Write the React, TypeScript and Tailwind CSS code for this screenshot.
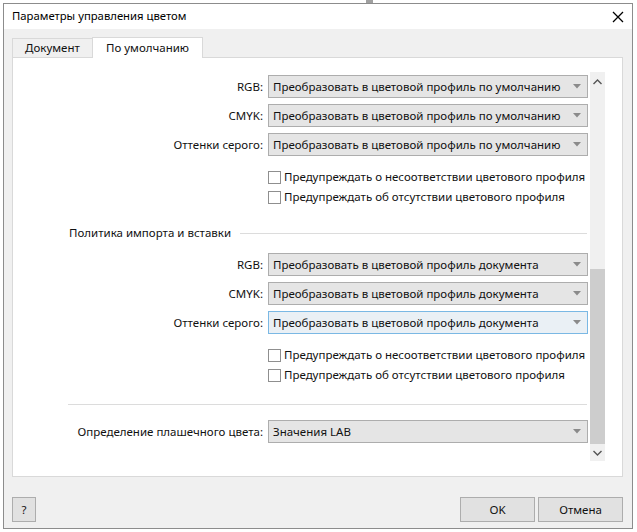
import React from "react";

const font = { fontFamily: '"Noto Sans", "Open Sans", sans-serif' };

function Arrow() {
  return (
    <svg width="8" height="5" viewBox="0 0 8 5" className="shrink-0">
      <path d="M0 0 L8 0 L4 4.5 Z" fill="#8a8a8a" />
    </svg>
  );
}

function Combo({ text, focused = false }: { text: string; focused?: boolean }) {
  return (
    <div
      className={
        "w-[320px] h-[23px] flex items-center pl-[4px] pr-[6px] border shrink-0 " +
        (focused ? "border-[#7ab8e4] bg-[#eaf0f5]" : "border-[#adadad] bg-[#e5e5e5]")
      }
    >
      <span className="flex-1 text-[11.5px] text-[#111] leading-none whitespace-nowrap">{text}</span>
      <Arrow />
    </div>
  );
}

function Row({ label, text, focused }: { label: string; text: string; focused?: boolean }) {
  return (
    <div className="flex items-center">
      <div className="w-[255px] shrink-0 text-right pr-[5px] text-[11.5px] text-[#111] whitespace-nowrap">{label}</div>
      <Combo text={text} focused={focused} />
    </div>
  );
}

function Check({ text }: { text: string }) {
  return (
    <div className="flex items-center h-[20px] pl-[255px]">
      <div className="w-[13px] h-[13px] border border-[#8f8f8f] bg-white shrink-0" />
      <span className="ml-[3px] text-[11.5px] text-[#111] whitespace-nowrap">{text}</span>
    </div>
  );
}

export default function App() {
  return (
    <div className="w-[637px] h-[532px] bg-white relative overflow-hidden" style={font}>
      <div className="absolute left-[366px] top-0 w-[7px] h-[3px] bg-[#a0a0a0]" />
      <div className="ml-[3px] mt-[3px] w-[630px] h-[526px] border border-[#8c8c8c] flex flex-col">
        {/* title bar */}
        <div className="h-[25px] bg-white flex items-center pl-[8px] pr-[8px] shrink-0">
          <span className="flex-1 text-[11.3px] text-[#000]">Параметры управления цветом</span>
          <svg width="12" height="12" viewBox="0 0 12 12">
            <path d="M1 1 L11 11 M11 1 L1 11" stroke="#000" strokeWidth="1.3" />
          </svg>
        </div>
        {/* body */}
        <div className="flex-1 bg-[#f0f0f0] flex flex-col pl-[8px] pr-[9px] pt-[7px]">
          {/* tabs */}
          <div className="flex items-end h-[21px] relative z-10">
            <div className="h-[19px] w-[81px] border border-b-0 border-[#d9d9d9] bg-[#f0f0f0] flex items-center justify-center text-[11.5px] text-[#111]">
              Документ
            </div>
            <div className="h-[21px] w-[111px] -ml-[1px] border border-b-0 border-[#d9d9d9] bg-white flex items-center justify-center text-[11.5px] text-[#111] mb-[-1px]">
              По умолчанию
            </div>
          </div>
          {/* panel */}
          <div className="h-[420px] border border-[#d9d9d9] bg-white flex">
            <div className="w-[575px] shrink-0 flex flex-col pt-[17px]">
              <div className="flex flex-col gap-[6px]">
                <Row label="RGB:" text="Преобразовать в цветовой профиль по умолчанию" />
                <Row label="CMYK:" text="Преобразовать в цветовой профиль по умолчанию" />
                <Row label="Оттенки серого:" text="Преобразовать в цветовой профиль по умолчанию" />
              </div>
              <div className="mt-[11px]">
                <Check text="Предупреждать о несоответствии цветового профиля" />
                <Check text="Предупреждать об отсутствии цветового профиля" />
              </div>
              <div className="mt-[16px] h-[20px] w-[574px] flex items-center pl-[56px]">
                <span className="text-[11.5px] text-[#111] whitespace-nowrap">Политика импорта и вставки</span>
                <div className="ml-[9px] flex-1 h-px bg-[#dcdcdc]" />
              </div>
              <div className="mt-[10px] flex flex-col gap-[6px]">
                <Row label="RGB:" text="Преобразовать в цветовой профиль документа" />
                <Row label="CMYK:" text="Преобразовать в цветовой профиль документа" />
                <Row label="Оттенки серого:" text="Преобразовать в цветовой профиль документа" focused />
              </div>
              <div className="mt-[11px]">
                <Check text="Предупреждать о несоответствии цветового профиля" />
                <Check text="Предупреждать об отсутствии цветового профиля" />
              </div>
              <div className="mt-[19px] ml-[55px] w-[519px] h-px bg-[#dcdcdc]" />
              <div className="mt-[15px]">
                <Row label="Определение плашечного цвета:" text="Значения LAB" />
              </div>
            </div>
            {/* scrollbar */}
            <div className="w-[15px] shrink-0 mt-[14px] mb-[15px] ml-[2px] bg-[#f0f0f0] flex flex-col items-center">
              <div className="h-[20px] flex items-center justify-center">
                <svg width="9" height="6" viewBox="0 0 9 6">
                  <path d="M0.5 5 L4.5 1 L8.5 5" stroke="#555" strokeWidth="1.4" fill="none" />
                </svg>
              </div>
              <div className="flex-1 w-full flex flex-col">
                <div className="h-[177px]" />
                <div className="flex-1 bg-[#cdcdcd]" />
              </div>
              <div className="h-[17px] flex items-center justify-center">
                <svg width="9" height="6" viewBox="0 0 9 6">
                  <path d="M0.5 1 L4.5 5 L8.5 1" stroke="#555" strokeWidth="1.4" fill="none" />
                </svg>
              </div>
            </div>
            <div className="flex-1" />
          </div>
          {/* buttons */}
          <div className="flex items-center mt-[20px]">
            <div className="w-[24px] h-[25px] border border-[#adadad] bg-[#e1e1e1] flex items-center justify-center text-[11.5px] text-[#111]">
              ?
            </div>
            <div className="flex-1" />
            <div className="w-[75px] h-[25px] border border-[#adadad] bg-[#e1e1e1] flex items-center justify-center text-[11.5px] text-[#111]">
              OK
            </div>
            <div className="ml-[3px] w-[85px] h-[25px] border border-[#adadad] bg-[#e1e1e1] flex items-center justify-center text-[11.5px] text-[#111]">
              Отмена
            </div>
          </div>
        </div>
      </div>
    </div>
  );
}
